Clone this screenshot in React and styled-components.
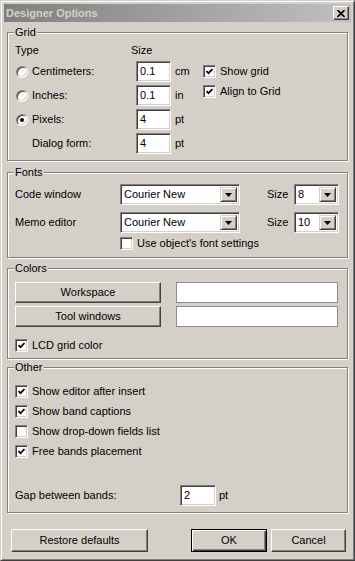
import React from "react";
import styled, { createGlobalStyle } from "styled-components";

const Global = createGlobalStyle`
  html, body { margin: 0; padding: 0; background: #d4d0c8; }
  body {
    font-family: "Liberation Sans", Arial, sans-serif;
    font-size: 11px;
    line-height: 13px;
    color: #000;
  }
`;

const Window = styled.div`
  width: 355px;
  height: 561px;
  box-sizing: border-box;
  background: #d4d0c8;
  border: 1px solid;
  border-color: #d4d0c8 #404040 #404040 #d4d0c8;
  box-shadow: inset 1px 1px #fff, inset -1px -1px #808080;
  padding: 3px;
  display: flex;
  flex-direction: column;
`;

const TitleBar = styled.div`
  height: 18px;
  display: flex;
  align-items: center;
  justify-content: space-between;
  padding: 0 2px 0 2px;
  background: linear-gradient(to right, #808080, #c0c0c0);
`;

const Title = styled.span`
  font-weight: bold;
  color: #d4d0c8;
`;

const raised = `
  background: #d4d0c8;
  border: 1px solid;
  border-color: #fff #404040 #404040 #fff;
  box-shadow: inset -1px -1px #808080;
  box-sizing: border-box;
`;

const sunken = `
  background: #fff;
  border: 1px solid;
  border-color: #808080 #fff #fff #808080;
  box-shadow: inset 1px 1px #404040, inset -1px -1px #d4d0c8;
  box-sizing: border-box;
`;

const CloseButton = styled.div`
  ${raised}
  width: 16px;
  height: 14px;
  display: flex;
  align-items: center;
  justify-content: center;
`;

const Group = styled.fieldset`
  margin: ${(p) => p.$mt}px 3px 0;
  padding: ${(p) => p.$pt}px 7px ${(p) => p.$pb}px;
  border: 1px solid #808080;
  box-shadow: inset 1px 1px #fff, 1px 1px #fff;
  min-width: 0;
`;

const Legend = styled.legend`
  padding: 0 1px;
  margin-left: -1px;
  line-height: 13px;
  background: #d4d0c8;
`;

const GridBody = styled.div`
  display: flex;
`;

const Column = styled.div`
  display: flex;
  flex-direction: column;
  gap: ${(p) => p.$gap || 0}px;
  padding-top: ${(p) => p.$pt || 0}px;
`;

const HeaderRow = styled.div`
  display: flex;
  height: 13px;
  margin-bottom: 4px;
`;

const HeaderCell = styled.span`
  width: ${(p) => p.$w}px;
`;

const Row = styled.div`
  display: flex;
  align-items: center;
  height: ${(p) => p.$h || 21}px;
  margin-top: ${(p) => p.$mt || 0}px;
`;

const Label = styled.span`
  width: ${(p) => p.$w}px;
  flex-shrink: 0;
  display: flex;
  align-items: center;
  gap: 4px;
`;

const RadioLabel = styled.label`
  width: 121px;
  display: flex;
  align-items: center;
  padding-left: ${(p) => (p.$plain ? 17 : 1)}px;
  box-sizing: border-box;
  gap: 4px;
`;

const RadioCircle = styled.span`
  width: 12px;
  height: 12px;
  border-radius: 50%;
  background: #fff;
  box-sizing: border-box;
  border: 1px solid;
  border-color: #808080 #fff #fff #808080;
  box-shadow: inset 1px 1px #404040, inset -1px -1px #d4d0c8;
  display: flex;
  align-items: center;
  justify-content: center;
  &::after {
    content: "";
    width: 4px;
    height: 4px;
    border-radius: 50%;
    background: ${(p) => (p.$on ? "#000" : "transparent")};
  }
`;

const TextBox = styled.div`
  ${sunken}
  width: ${(p) => p.$w}px;
  height: 21px;
  padding: 0 3px;
  display: flex;
  align-items: center;
`;

const PlainBox = styled.div`
  width: ${(p) => p.$w}px;
  height: 21px;
  box-sizing: border-box;
  background: #fff;
  border: 1px solid #8c8c8c;
`;

const Unit = styled.span`
  width: 32px;
  padding-left: 4px;
  box-sizing: border-box;
`;

const CheckRow = styled.label`
  display: flex;
  align-items: center;
  gap: 4px;
  height: 20px;
  margin-left: ${(p) => p.$ml || 0}px;
`;

const Box = styled.span`
  ${sunken}
  width: 13px;
  height: 13px;
  display: flex;
  align-items: center;
  justify-content: center;
`;

const Combo = styled.div`
  ${sunken}
  width: ${(p) => p.$w}px;
  height: 21px;
  padding: 2px;
  display: flex;
  align-items: stretch;
`;

const ComboText = styled.span`
  flex: 1;
  display: flex;
  align-items: center;
  padding-left: 1px;
`;

const DropButton = styled.span`
  ${raised}
  box-shadow: inset 1px 1px #fff, inset -1px -1px #808080;
  border-color: #d4d0c8 #404040 #404040 #d4d0c8;
  width: 17px;
  display: flex;
  align-items: center;
  justify-content: center;
`;

const PushButton = styled.div`
  ${raised}
  width: ${(p) => p.$w}px;
  height: ${(p) => p.$h || 21}px;
  display: flex;
  align-items: center;
  justify-content: center;
  ${(p) =>
    p.$default &&
    `
    border: 1px solid #000;
    box-shadow: inset 1px 1px #fff, inset -1px -1px #404040, inset -2px -2px #808080;
  `}
`;

const ColorRow = styled.div`
  display: flex;
  gap: 15px;
`;

const Footer = styled.div`
  display: flex;
  align-items: center;
  margin: 16px 5px 0 7px;
`;

const Spacer = styled.div`
  flex: 1;
`;

const Check = ({ on }) => (
  <Box>
    {on && (
      <svg width="7" height="7" viewBox="0 0 7 7">
        <polyline points="0.5,3 2.5,5.2 6.5,1" fill="none" stroke="#000" strokeWidth="1.7" />
      </svg>
    )}
  </Box>
);

const CheckItem = ({ on, children, ml }) => (
  <CheckRow $ml={ml}>
    <Check on={on} />
    <span>{children}</span>
  </CheckRow>
);

const Arrow = () => (
  <svg width="7" height="4" viewBox="0 0 7 4">
    <polygon points="0,0 7,0 3.5,4" fill="#000" />
  </svg>
);

const ComboBox = ({ w, value }) => (
  <Combo $w={w}>
    <ComboText>{value}</ComboText>
    <DropButton>
      <Arrow />
    </DropButton>
  </Combo>
);

const gridRows = [
  { label: "Centimeters:", value: "0.1", unit: "cm", radio: true },
  { label: "Inches:", value: "0.1", unit: "in", radio: true },
  { label: "Pixels:", value: "4", unit: "pt", radio: true, on: true },
  { label: "Dialog form:", value: "4", unit: "pt" },
];

const otherChecks = [
  { text: "Show editor after insert", on: true },
  { text: "Show band captions", on: true },
  { text: "Show drop-down fields list", on: false },
  { text: "Free bands placement", on: true },
];

const App = () => (
  <>
    <Global />
    <Window>
      <TitleBar>
        <Title>Designer Options</Title>
        <CloseButton>
          <svg width="8" height="7" viewBox="0 0 8 7">
            <path d="M0.5 0 L7.5 7 M7.5 0 L0.5 7" stroke="#000" strokeWidth="1.6" />
          </svg>
        </CloseButton>
      </TitleBar>

      <Group $mt={4} $pt={5} $pb={6}>
        <Legend>Grid</Legend>
        <GridBody>
          <Column>
            <HeaderRow>
              <HeaderCell $w={116}>Type</HeaderCell>
              <HeaderCell $w={40}>Size</HeaderCell>
            </HeaderRow>
            <Column $gap={3}>
              {gridRows.map((r) => (
                <Row key={r.label}>
                  <RadioLabel $plain={!r.radio}>
                    {r.radio && <RadioCircle $on={r.on} />}
                    <span>{r.label}</span>
                  </RadioLabel>
                  <TextBox $w={35}>{r.value}</TextBox>
                  <Unit>{r.unit}</Unit>
                </Row>
              ))}
            </Column>
          </Column>
          <Column $pt={17}>
            <CheckItem on>Show grid</CheckItem>
            <CheckItem on>Align to Grid</CheckItem>
          </Column>
        </GridBody>
      </Group>

      <Group $mt={5} $pt={5} $pb={4}>
        <Legend>Fonts</Legend>
        <Row>
          <Label $w={105}>Code window</Label>
          <ComboBox w={120} value="Courier New" />
          <Label $w={27} style={{ marginLeft: 27 }}>Size</Label>
          <ComboBox w={45} value="8" />
        </Row>
        <Row $mt={7}>
          <Label $w={105}>Memo editor</Label>
          <ComboBox w={120} value="Courier New" />
          <Label $w={27} style={{ marginLeft: 27 }}>Size</Label>
          <ComboBox w={45} value="10" />
        </Row>
        <CheckItem ml={105}>Use object's font settings</CheckItem>
      </Group>

      <Group $mt={4} $pt={7} $pb={3}>
        <Legend>Colors</Legend>
        <Column $gap={3}>
          <ColorRow>
            <PushButton $w={146}>Workspace</PushButton>
            <PlainBox $w={162} />
          </ColorRow>
          <ColorRow>
            <PushButton $w={146}>Tool windows</PushButton>
            <PlainBox $w={162} />
          </ColorRow>
        </Column>
        <Row $h={20} $mt={8}>
          <CheckItem on>LCD grid color</CheckItem>
        </Row>
      </Group>

      <Group $mt={2} $pt={7} $pb={6}>
        <Legend>Other</Legend>
        {otherChecks.map((c) => (
          <CheckItem key={c.text} on={c.on}>
            {c.text}
          </CheckItem>
        ))}
        <Row $mt={24}>
          <Label $w={165}>Gap between bands:</Label>
          <TextBox $w={36}>2</TextBox>
          <Unit style={{ paddingLeft: 3 }}>pt</Unit>
        </Row>
      </Group>

      <Footer>
        <PushButton $w={137} $h={23}>Restore defaults</PushButton>
        <Spacer />
        <PushButton $w={76} $h={23} $default>OK</PushButton>
        <PushButton $w={75} $h={23} style={{ marginLeft: 4 }}>Cancel</PushButton>
      </Footer>
    </Window>
  </>
);

export default App;
